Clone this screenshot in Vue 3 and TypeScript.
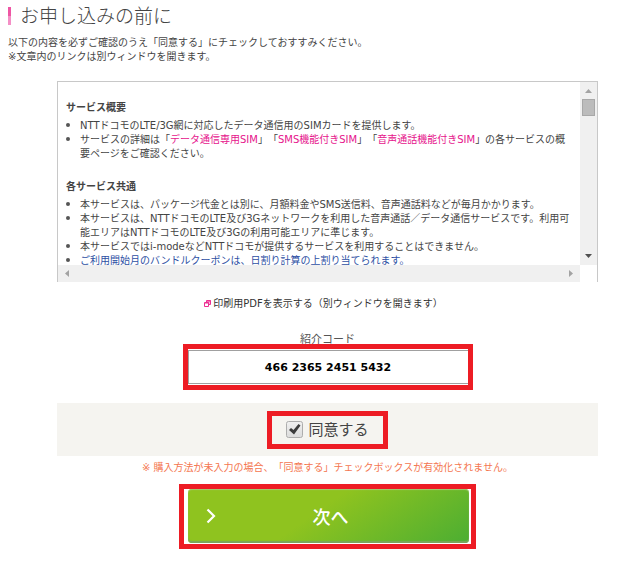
<script setup lang="ts">
import { ref } from 'vue'

const code = ref('466 2365 2451 5432')
const agreed = ref(true)
</script>

<template>
  <main class="page">
    <header>
      <h1 class="title">お申し込みの前に</h1>
      <p class="lead">
        以下の内容を必ずご確認のうえ「同意する」にチェックしておすすみください。<br />※文章内のリンクは別ウィンドウを開きます。
      </p>
    </header>

    <form class="form" @submit.prevent>
      <section class="terms" aria-label="サービス概要">
        <div class="terms-body" tabindex="0">
          <h2>サービス概要</h2>
          <ul>
            <li>NTTドコモのLTE/3G網に対応したデータ通信用のSIMカードを提供します。</li>
            <li>サービスの詳細は「<a href="#data">データ通信専用SIM</a>」「<a href="#sms">SMS機能付きSIM</a>」「<a href="#voice">音声通話機能付きSIM</a>」の各サービスの概<br />要ページをご確認ください。</li>
          </ul>
          <h2>各サービス共通</h2>
          <ul>
            <li>本サービスは、パッケージ代金とは別に、月額料金やSMS送信料、音声通話料などが毎月かかります。</li>
            <li>本サービスは、NTTドコモのLTE及び3Gネットワークを利用した音声通話／データ通信サービスです。利用可<br />能エリアはNTTドコモのLTE及び3Gの利用可能エリアに準じます。</li>
            <li>本サービスではi-modeなどNTTドコモが提供するサービスを利用することはできません。</li>
            <li class="notice">ご利用開始月のバンドルクーポンは、日割り計算の上割り当てられます。</li>
          </ul>
        </div>
        <div class="bar vertical" aria-hidden="true">
          <svg class="arrow" viewBox="0 0 17 17"><path d="M5 11h7L8.500 7z" fill="#a3a3a3" /></svg>
          <span class="thumb"></span>
          <svg class="arrow last" viewBox="0 0 17 17"><path d="M5 6h7L8.500 10z" fill="#505050" /></svg>
        </div>
        <div class="bar horizontal" aria-hidden="true">
          <svg class="arrow" viewBox="0 0 17 17"><path d="M11 5v7L7 8.500z" fill="#a3a3a3" /></svg>
          <svg class="arrow" viewBox="0 0 17 17"><path d="M6 5v7L10 8.500z" fill="#a3a3a3" /></svg>
        </div>
      </section>

      <a class="pdf" href="#pdf">
        <svg class="pdf-icon" viewBox="0 0 8 8" aria-hidden="true">
          <path d="M2.500 .5h4v4h-4z" fill="#fbb6da" stroke="#ec2f92" />
          <path d="M.5 2.500h4v4h-4z" fill="#fff" stroke="#ec2f92" />
          <path d="M1 3h4M3 1h4" stroke="#ec2f92" />
        </svg>
        印刷用PDFを表示する（別ウィンドウを開きます）
      </a>

      <label class="code-label" for="code">紹介コード</label>
      <div class="mark code-mark">
        <input id="code" v-model="code" class="code" type="text" />
      </div>

      <div class="agree">
        <label class="mark agree-mark">
          <input v-model="agreed" class="agree-input" type="checkbox" />
          <svg class="box" viewBox="0 0 17 17" aria-hidden="true">
            <defs>
              <linearGradient id="box-fill" x1="0" y1="0" x2="0" y2="1">
                <stop offset="0" stop-color="#f0f0f0" />
                <stop offset="1" stop-color="#dcdcdc" />
              </linearGradient>
            </defs>
            <rect x=".5" y=".5" width="16" height="16" rx="2" fill="url(#box-fill)" stroke="#adadad" />
            <path v-if="agreed" d="M3 9l2-2 2.500 2L12.500 3l2 1.500L8 13.500z" fill="#3c3c3c" />
          </svg>
          <span>同意する</span>
        </label>
      </div>
      <p class="warning">※ 購入方法が未入力の場合、「同意する」チェックボックスが有効化されません。</p>

      <div class="mark next-mark">
        <button class="next" type="submit">
          <svg class="chevron" viewBox="0 0 10 16" aria-hidden="true">
            <path d="M1.500 1.500L8 8l-6.500 6.500" fill="none" stroke="#fff" stroke-width="2.200" />
          </svg>
          <span>次へ</span>
        </button>
      </div>
    </form>
  </main>
</template>

<style>
body {
  margin: 0;
  background: #fff;
}
</style>

<style scoped>
.page {
  box-sizing: border-box;
  padding: 4px 19px 12px 8px;
  font-family: "DejaVu Sans", "Noto Sans CJK JP", sans-serif;
  font-size: 10px;
  line-height: 14px;
  text-spacing-trim: space-all;
  color: #444;
}

.title {
  display: flex;
  align-items: center;
  gap: 9px;
  margin: 0;
  font-size: 19px;
  font-weight: 300;
  line-height: 24px;
}

.title::before {
  content: "";
  width: 3px;
  height: 18px;
  background: linear-gradient(#ee56a4 50%, #f48fc6 50%);
}

.lead {
  margin: 8px 0 0;
}

.form {
  display: flex;
  flex-direction: column;
  align-items: center;
  margin: 17px 0 0 49px;
}

.terms {
  display: grid;
  grid-template: 183px 17px / minmax(0, 1fr) 17px;
  align-self: stretch;
  border: 1px solid #c8c8c8;
  border-bottom: 0;
}

.terms-body {
  overflow: auto;
  scrollbar-width: none;
  padding: 5px 0 0 8px;
  white-space: nowrap;
  outline: 0;
}

.terms h2 {
  margin: 14px 0 4px;
  font-size: 10px;
  font-weight: 700;
  line-height: 14px;
}

.terms ul {
  margin: 0 0 19px;
  padding: 0 0 0 14px;
  list-style: none;
}

.terms li::before {
  content: "";
  display: inline-block;
  width: 4px;
  height: 4px;
  margin: 0 10px 0 -14px;
  border-radius: 50%;
  background: #555;
  vertical-align: 2px;
}

.terms a {
  color: #e6148c;
  text-decoration: none;
}

.notice {
  color: #2d4fa3;
}

.bar {
  display: flex;
  background: #f0f0f0;
}

.vertical {
  flex-direction: column;
  align-items: center;
}

.horizontal {
  justify-content: space-between;
}

.arrow {
  width: 17px;
  height: 17px;
}

.last {
  margin-top: auto;
}

.thumb {
  box-sizing: border-box;
  width: 13px;
  height: 17px;
  border: 1px solid #a8a8a8;
  background: #bcbcbc;
}

.pdf {
  display: flex;
  align-items: center;
  gap: 1px;
  margin-top: 15px;
  padding-right: 8px;
  color: #333;
  text-decoration: none;
}

.pdf-icon {
  width: 8px;
  height: 8px;
}

.code-label {
  margin-top: 22px;
  font-size: 11px;
  line-height: 14px;
  color: #555;
}

.mark {
  box-sizing: border-box;
  border: 5px solid #ed1c24;
  background: #fff;
}

.code-mark {
  width: 290px;
  height: 46px;
  margin-top: -3px;
}

.code {
  box-sizing: border-box;
  width: 100%;
  height: 34px;
  margin-top: 1px;
  padding: 0;
  border: 1px solid #a0a0a0;
  border-right: 0;
  font-family: "DejaVu Sans", sans-serif;
  font-size: 11px;
  font-weight: 700;
  text-align: center;
  color: #000;
  background: #fff;
}

.agree {
  display: flex;
  align-items: center;
  justify-content: center;
  align-self: stretch;
  height: 53px;
  margin-top: 13px;
  background: #f5f4f0;
}

.agree-mark {
  display: flex;
  align-items: center;
  justify-content: center;
  gap: 5px;
  width: 121px;
  height: 38px;
  font-size: 15px;
  background: none;
}

.agree-input {
  position: absolute;
  opacity: 0;
}

.box {
  width: 17px;
  height: 17px;
}

.warning {
  margin: 5px 0 0;
  color: #f47650;
}

.next-mark {
  display: flex;
  width: 297px;
  height: 65px;
  margin-top: 9px;
  padding: 0 2px 1px 4px;
}

.next {
  display: grid;
  grid-template-columns: 10px 1fr 10px;
  align-items: center;
  flex: 1;
  padding: 0 14px 0 18px;
  border: 0;
  border-radius: 4px;
  font-family: "Noto Sans CJK JP", sans-serif;
  font-size: 18px;
  font-weight: 500;
  line-height: 24px;
  color: #fff;
  background: linear-gradient(145deg, #8fc31f 45%, #4cae32);
  box-shadow: inset 0 1px 1px #a5ca75, inset 0 -2px 1px #7aa65a;
}

.chevron {
  width: 10px;
  height: 16px;
}
</style>
